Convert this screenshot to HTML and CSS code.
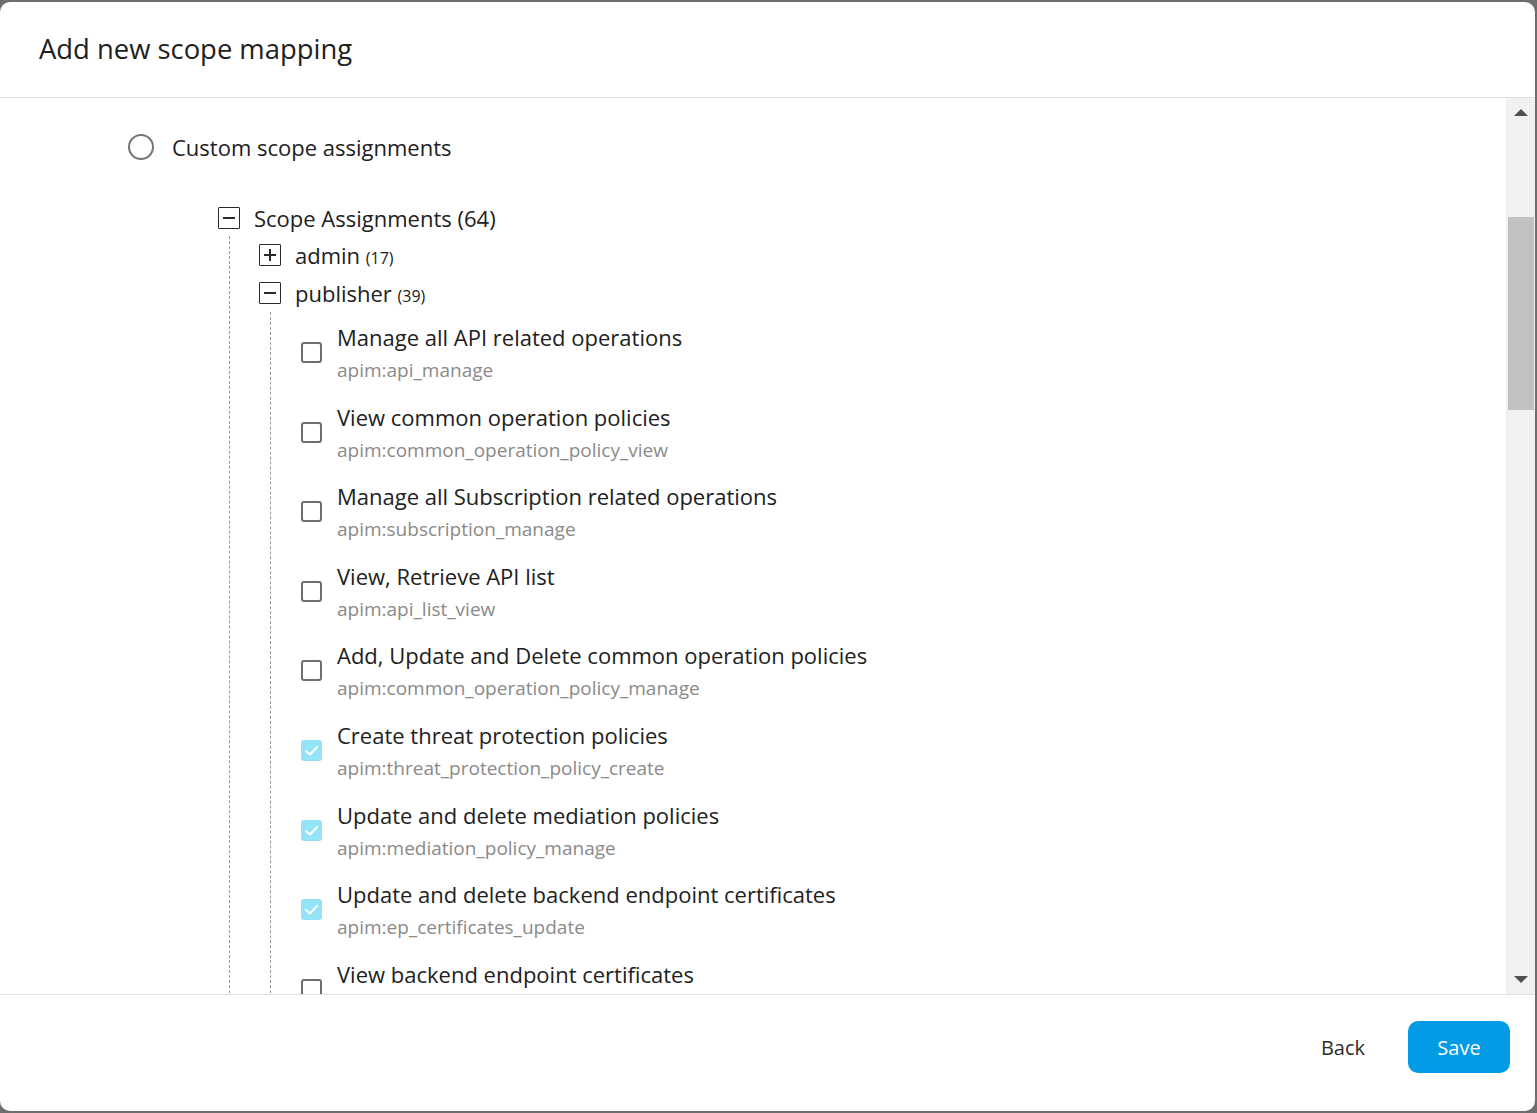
FILE: index.html
```html
<!DOCTYPE html>
<html lang="en">
<head>
<meta charset="utf-8">
<title>Add new scope mapping</title>
<link rel="stylesheet" href="styles.css">
</head>
<body>
<div class="dialog">
  <div class="dialog-header">
    <h2 class="dialog-title">Add new scope mapping</h2>
  </div>
  <div class="dialog-body">
    <div class="content">
      <div class="radio-row">
        <span class="radio"></span>
        <span class="radio-label">Custom scope assignments</span>
      </div>
      <div class="tree">
        <div class="tree-row root-row">
          <span class="toggle"><span class="bar-h"></span></span>
          <span class="tree-label">Scope Assignments (64)</span>
        </div>
        <div class="tree-children">
          <div class="tree-row">
            <span class="toggle"><span class="bar-h"></span><span class="bar-v"></span></span>
            <span class="tree-label">admin <small class="count">(17)</small></span>
          </div>
          <div class="tree-row">
            <span class="toggle"><span class="bar-h"></span></span>
            <span class="tree-label">publisher <small class="count">(39)</small></span>
          </div>
          <div class="tree-children leaf-list">
            <div class="scope-item">
              <span class="checkbox"></span>
              <div class="scope-text"><div class="scope-name">Manage all API related operations</div><div class="scope-key">apim:api_manage</div></div>
            </div>
            <div class="scope-item">
              <span class="checkbox"></span>
              <div class="scope-text"><div class="scope-name">View common operation policies</div><div class="scope-key">apim:common_operation_policy_view</div></div>
            </div>
            <div class="scope-item">
              <span class="checkbox"></span>
              <div class="scope-text"><div class="scope-name">Manage all Subscription related operations</div><div class="scope-key">apim:subscription_manage</div></div>
            </div>
            <div class="scope-item">
              <span class="checkbox"></span>
              <div class="scope-text"><div class="scope-name">View, Retrieve API list</div><div class="scope-key">apim:api_list_view</div></div>
            </div>
            <div class="scope-item">
              <span class="checkbox"></span>
              <div class="scope-text"><div class="scope-name">Add, Update and Delete common operation policies</div><div class="scope-key">apim:common_operation_policy_manage</div></div>
            </div>
            <div class="scope-item">
              <span class="checkbox checked"><svg viewBox="0 0 21 21" width="21" height="21"><polyline points="5,11 9,14.5 16,7" fill="none" stroke="#fff" stroke-width="2" stroke-linecap="round" stroke-linejoin="round"/></svg></span>
              <div class="scope-text"><div class="scope-name">Create threat protection policies</div><div class="scope-key">apim:threat_protection_policy_create</div></div>
            </div>
            <div class="scope-item">
              <span class="checkbox checked"><svg viewBox="0 0 21 21" width="21" height="21"><polyline points="5,11 9,14.5 16,7" fill="none" stroke="#fff" stroke-width="2" stroke-linecap="round" stroke-linejoin="round"/></svg></span>
              <div class="scope-text"><div class="scope-name">Update and delete mediation policies</div><div class="scope-key">apim:mediation_policy_manage</div></div>
            </div>
            <div class="scope-item">
              <span class="checkbox checked"><svg viewBox="0 0 21 21" width="21" height="21"><polyline points="5,11 9,14.5 16,7" fill="none" stroke="#fff" stroke-width="2" stroke-linecap="round" stroke-linejoin="round"/></svg></span>
              <div class="scope-text"><div class="scope-name">Update and delete backend endpoint certificates</div><div class="scope-key">apim:ep_certificates_update</div></div>
            </div>
            <div class="scope-item">
              <span class="checkbox"></span>
              <div class="scope-text"><div class="scope-name">View backend endpoint certificates</div><div class="scope-key">apim:ep_certificates_view</div></div>
            </div>
          </div>
        </div>
      </div>
    </div>
    <div class="scrollbar">
      <span class="arrow arrow-up"></span>
      <div class="track">
        <div class="thumb"></div>
      </div>
      <span class="arrow arrow-down"></span>
    </div>
  </div>
  <div class="dialog-footer">
    <button class="btn btn-text">Back</button>
    <button class="btn btn-primary">Save</button>
  </div>
</div>
</body>
</html>
```

FILE: styles.css
```css
html, body {
  margin: 0;
  height: 100%;
}
body {
  background: #6e6e6e;
  padding: 2px 2px 2px 0;
  box-sizing: border-box;
  font-family: "Open Sans", "Noto Sans", sans-serif;
  color: #212121;
  overflow: hidden;
}
.dialog {
  background: #fff;
  height: 1109px;
  border-radius: 10px;
  display: flex;
  flex-direction: column;
  overflow: hidden;
}
.dialog-header {
  height: 95px;
  border-bottom: 1px solid #e0e0e0;
  display: flex;
  align-items: center;
  padding-left: 39px;
  flex-shrink: 0;
}
.dialog-title {
  margin: 0;
  font-size: 27.4px;
  font-weight: 400;
  color: #212121;
  position: relative;
  top: -1px;
}
.dialog-body {
  height: 896px;
  display: flex;
  flex-shrink: 0;
}
.content {
  flex: 1;
  overflow: hidden;
  padding: 24px 0 0 128px;
}
.radio-row {
  display: flex;
  align-items: center;
  height: 50px;
  gap: 18px;
}
.radio {
  width: 26px;
  height: 26px;
  box-sizing: border-box;
  border: 2.5px solid #757575;
  border-radius: 50%;
}
.radio-label {
  font-size: 22px;
}
.tree {
  margin-top: 28px;
  margin-left: 90px;
}
.tree-row {
  display: flex;
  align-items: center;
  height: 38px;
  gap: 14px;
}
.root-row {
  height: 36px;
}
.toggle {
  width: 22px;
  height: 22px;
  box-sizing: border-box;
  border: 1.5px solid #2b2b2b;
  border-radius: 1px;
  position: relative;
  flex-shrink: 0;
}
.bar-h {
  position: absolute;
  left: 4px;
  right: 4px;
  top: 9px;
  height: 1.5px;
  background: #2b2b2b;
}
.bar-v {
  position: absolute;
  top: 4px;
  bottom: 4px;
  left: 9.25px;
  width: 1.5px;
  background: #2b2b2b;
}
.tree-label {
  font-size: 22px;
}
.count {
  font-size: 16px;
}
.tree-children {
  margin-left: 11px;
  border-left: 1px dashed #9a9a9a;
  padding-left: 29px;
}
.leaf-list {
  padding-left: 30px;
}
.scope-item {
  display: flex;
  align-items: center;
  gap: 15px;
  padding: 10px 0 6.6px;
}
.checkbox {
  width: 21px;
  height: 21px;
  box-sizing: border-box;
  border: 2px solid #6f6f6f;
  border-radius: 3px;
  flex-shrink: 0;
  position: relative;
  top: -1px;
}
.checkbox.checked {
  border: none;
  background: #93e4f6;
}
.checkbox svg {
  display: block;
}
.scope-name {
  font-size: 22px;
  line-height: 30px;
}
.scope-key {
  font-size: 19px;
  line-height: 30px;
  margin-top: 3px;
  color: #8a8a8a;
}
.scrollbar {
  width: 29px;
  background: #f1f1f1;
  display: flex;
  flex-direction: column;
  align-items: center;
}
.arrow {
  width: 0;
  height: 0;
  border-left: 7px solid transparent;
  border-right: 7px solid transparent;
  margin: 11px 0;
}
.arrow-up {
  border-bottom: 7px solid #505050;
}
.arrow-down {
  border-top: 7px solid #505050;
}
.track {
  flex: 1;
  width: 100%;
  padding-top: 90px;
  box-sizing: border-box;
  display: flex;
  justify-content: center;
}
.thumb {
  width: 26px;
  height: 193px;
  background: #c1c1c1;
}
.dialog-footer {
  flex: 1;
  border-top: 1px solid #e0e0e0;
  display: flex;
  justify-content: flex-end;
  align-items: flex-start;
  padding: 26px 25px 0 0;
  gap: 27px;
}
.btn {
  font-family: "Open Sans", "Noto Sans", sans-serif;
  font-size: 20px;
  height: 52px;
  border: none;
  border-radius: 10px;
  cursor: pointer;
}
.btn-text {
  background: transparent;
  color: #2b2b2b;
  padding: 0 16px;
}
.btn-primary {
  background: #039be5;
  color: #fff;
  width: 102px;
}
```
